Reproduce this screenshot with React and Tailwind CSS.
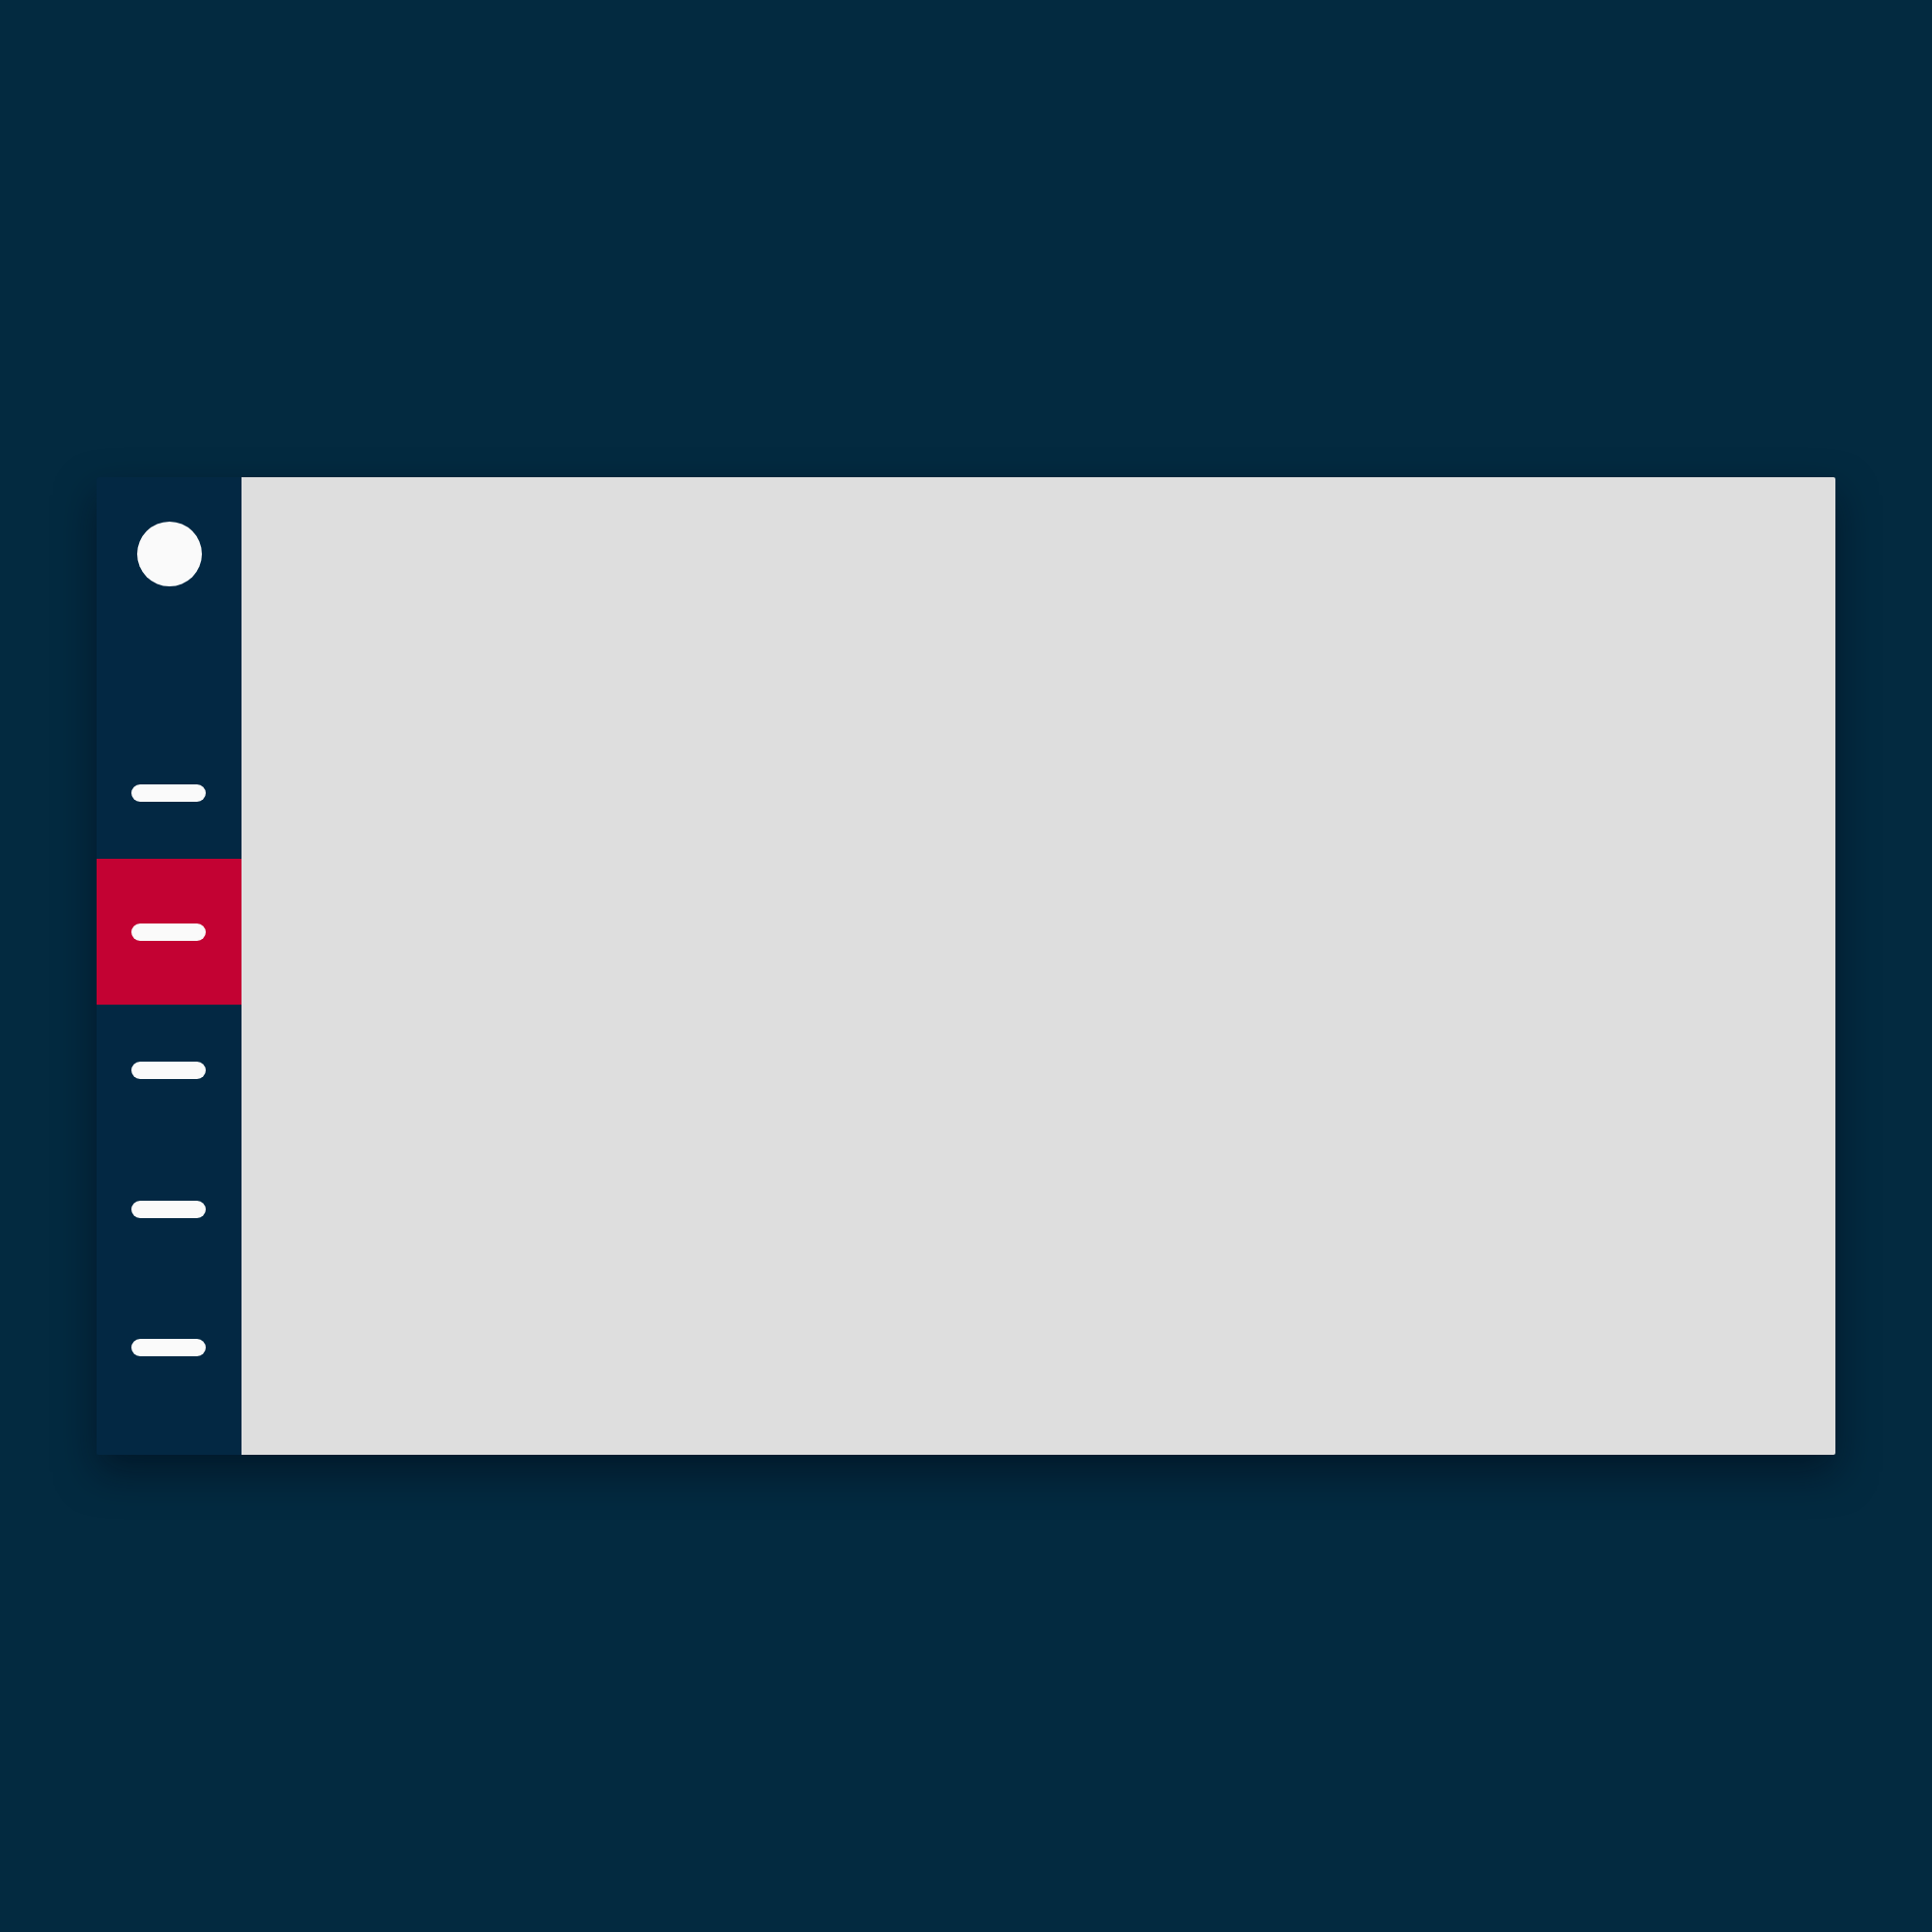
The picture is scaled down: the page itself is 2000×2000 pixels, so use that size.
import React from 'react';

const items = [false, true, false, false, false];

const App = () => {
    return (
        <div className="w-[2000px] h-[2000px] bg-[#032a40] flex items-center justify-center">
            {/* 16:9 card */}
            <div className="w-[1800px] h-[1012.5px] flex rounded-[2px] overflow-hidden shadow-[0_18px_40px_rgba(0,8,20,0.5)]">
                {/* Sidebar */}
                <aside className="w-[150px] shrink-0 bg-[#032843] flex flex-col">
                    <div className="pt-[46px] flex justify-center">
                        <div className="w-[67px] h-[67px] rounded-full bg-[#fafafa]"></div>
                    </div>
                    <div className="flex-1"></div>
                    <nav className="flex flex-col pb-[39px]">
                        {items.map((active, i) => (
                            <div key={i} className="relative h-[143.6px] flex items-center justify-center">
                                {active && (
                                    <span className="absolute inset-x-0 top-[-4px] bottom-[-3.5px] bg-[#c30233]"></span>
                                )}
                                <span className="relative w-[77px] h-[18px] rounded-full bg-[#fafafa] -ml-[2px]"></span>
                            </div>
                        ))}
                    </nav>
                </aside>
                {/* Content */}
                <main className="flex-1 bg-[#dedede]"></main>
            </div>
        </div>
    );
};

export default App;
